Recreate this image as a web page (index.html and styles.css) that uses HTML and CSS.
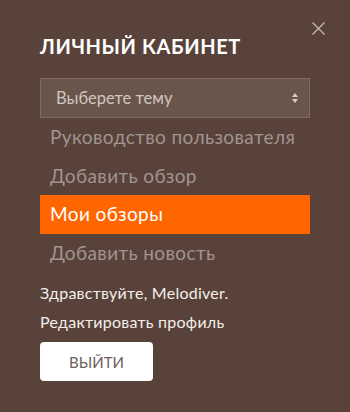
FILE: index.html
```html
<!DOCTYPE html>
<html lang="ru">
<head>
<meta charset="UTF-8" />
<title>Личный кабинет</title>
<link rel="stylesheet" href="styles.css">
</head>
<body>

<div class="cabinet">
	<a class="close" href="#" aria-label="Закрыть">
		<svg width="13" height="13" viewBox="0 0 13 13"><path d="M0.5 0.5 L12.5 12.5 M12.5 0.5 L0.5 12.5" stroke="#c9bdb7" stroke-width="1.2" fill="none"/></svg>
	</a>

	<h2 class="title">ЛИЧНЫЙ КАБИНЕТ</h2>

	<div class="select">
		<span>Выберете тему</span>
		<svg width="8" height="12" viewBox="0 0 8 12"><path d="M4 1 L7 5 H1 Z M4 11 L7 7 H1 Z" fill="#d6ccc6"/></svg>
	</div>

	<ul class="menu">
		<li><a href="#">Руководство пользователя</a></li>
		<li><a href="#">Добавить обзор</a></li>
		<li class="active"><a href="#">Мои обзоры</a></li>
		<li><a href="#">Добавить новость</a></li>
	</ul>

	<p class="hello">Здравствуйте, Melodiver.</p>
	<p class="edit"><a href="#">Редактировать профиль</a></p>

	<button class="logout" type="button">ВЫЙТИ</button>
</div>

</body>
</html>
```

FILE: styles.css
```css
body
{
	margin: 0;
	background-color: #59423a;
	font-family: Lato, "Open Sans", sans-serif;
}

.cabinet
{
	position: relative;
	width: 270px;
	padding: 33px 40px 30px 40px;
}

.close
{
	position: absolute;
	top: 22px;
	left: 312px;
	display: block;
	line-height: 0;
}

.title
{
	margin: 0 0 19px 0;
	font-size: 20px;
	font-weight: bold;
	line-height: 26px;
	color: #fff;
	letter-spacing: 0.6px;
}

.select
{
	display: flex;
	align-items: center;
	justify-content: space-between;
	box-sizing: border-box;
	height: 40px;
	padding: 0 10px 0 15px;
	background-color: #6a554b;
	border: 1px solid #7f6a60;
	font-size: 16.5px;
	color: #d0c6c0;
}

.menu
{
	list-style: none;
	margin: 0;
	padding: 0;
}

.menu li a
{
	display: block;
	height: 38.5px;
	line-height: 38px;
	padding: 0 10px;
	font-size: 19px;
	letter-spacing: 0.4px;
	color: #a09591;
	text-decoration: none;
}

.menu li.active a
{
	background-color: #ff6600;
	color: #fff;
}

.hello, .edit
{
	margin: 0;
	font-size: 16px;
	letter-spacing: 0.25px;
	line-height: 29px;
	color: #f4efe9;
}

.hello
{
	margin-top: 6px;
}

.edit a
{
	color: #f4efe9;
	text-decoration: none;
}

.logout
{
	margin-top: 6px;
	width: 113px;
	height: 39px;
	border: none;
	border-radius: 4px;
	background-color: #fff;
	font-family: Lato, "Open Sans", sans-serif;
	font-size: 15px;
	color: #6d625e;
}
```
